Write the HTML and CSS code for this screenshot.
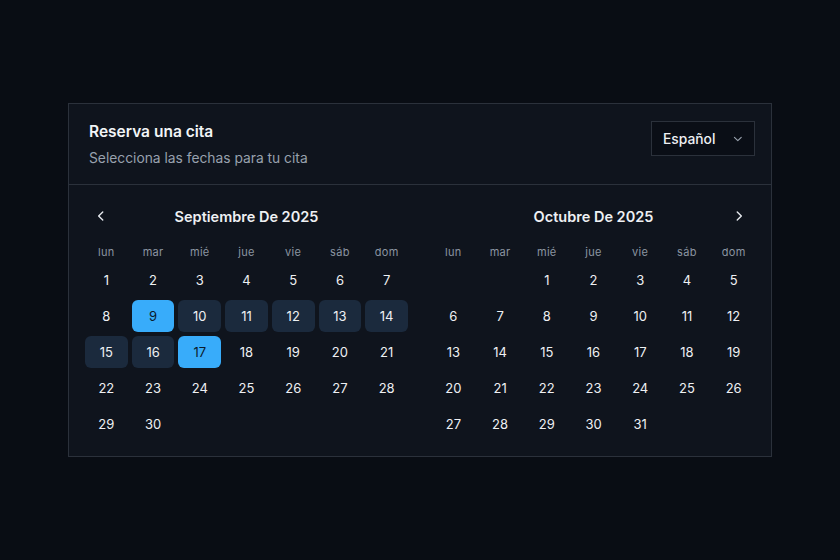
FILE: index.html
```html
<!DOCTYPE html>
<html lang="es">
<head>
    <meta charset="UTF-8">
    <meta name="viewport" content="width=device-width, initial-scale=1.0">
    <title>Reserva una cita</title>
    <link rel="stylesheet" href="styles.css">
</head>
<body>
    <div class="card">
        <div class="card-header">
            <div>
                <h1>Reserva una cita</h1>
                <p class="subtitle">Selecciona las fechas para tu cita</p>
            </div>
            <button class="select">
                <span>Español</span>
                <svg width="14" height="14" viewBox="0 0 24 24" fill="none" stroke="currentColor" stroke-width="2" stroke-linecap="round" stroke-linejoin="round"><path d="M6 9l6 6 6-6"/></svg>
            </button>
        </div>

        <div class="months">
            <div class="month">
                <div class="month-head">
                    <button class="nav nav-prev">
                        <svg width="14" height="14" viewBox="0 0 24 24" fill="none" stroke="currentColor" stroke-width="2.4" stroke-linecap="round" stroke-linejoin="round"><path d="M15 5l-7 7 7 7"/></svg>
                    </button>
                    <span class="month-title">Septiembre De 2025</span>
                </div>
                <div class="grid">
                    <span class="wd">lun</span><span class="wd">mar</span><span class="wd">mié</span><span class="wd">jue</span><span class="wd">vie</span><span class="wd">sáb</span><span class="wd">dom</span>
                    <span class="day">1</span><span class="day">2</span><span class="day">3</span><span class="day">4</span><span class="day">5</span><span class="day">6</span><span class="day">7</span>
                    <span class="day">8</span><span class="day selected">9</span><span class="day range">10</span><span class="day range">11</span><span class="day range">12</span><span class="day range">13</span><span class="day range">14</span>
                    <span class="day range">15</span><span class="day range">16</span><span class="day selected">17</span><span class="day">18</span><span class="day">19</span><span class="day">20</span><span class="day">21</span>
                    <span class="day">22</span><span class="day">23</span><span class="day">24</span><span class="day">25</span><span class="day">26</span><span class="day">27</span><span class="day">28</span>
                    <span class="day">29</span><span class="day">30</span>
                </div>
            </div>

            <div class="month">
                <div class="month-head">
                    <span class="month-title">Octubre De 2025</span>
                    <button class="nav nav-next">
                        <svg width="14" height="14" viewBox="0 0 24 24" fill="none" stroke="currentColor" stroke-width="2.4" stroke-linecap="round" stroke-linejoin="round"><path d="M9 5l7 7-7 7"/></svg>
                    </button>
                </div>
                <div class="grid">
                    <span class="wd">lun</span><span class="wd">mar</span><span class="wd">mié</span><span class="wd">jue</span><span class="wd">vie</span><span class="wd">sáb</span><span class="wd">dom</span>
                    <span class="day empty"></span><span class="day empty"></span><span class="day">1</span><span class="day">2</span><span class="day">3</span><span class="day">4</span><span class="day">5</span>
                    <span class="day">6</span><span class="day">7</span><span class="day">8</span><span class="day">9</span><span class="day">10</span><span class="day">11</span><span class="day">12</span>
                    <span class="day">13</span><span class="day">14</span><span class="day">15</span><span class="day">16</span><span class="day">17</span><span class="day">18</span><span class="day">19</span>
                    <span class="day">20</span><span class="day">21</span><span class="day">22</span><span class="day">23</span><span class="day">24</span><span class="day">25</span><span class="day">26</span>
                    <span class="day">27</span><span class="day">28</span><span class="day">29</span><span class="day">30</span><span class="day">31</span>
                </div>
            </div>
        </div>
    </div>
</body>
</html>
```

FILE: styles.css
```css
body {
    margin: 0;
    padding: 103px 68px;
    background-color: #090d14;
    color: #e6e9ee;
    font-family: Inter, "Liberation Sans", sans-serif;
}
.card {
    width: 702px;
    background: #0f141d;
    border: 1px solid #2b313b;
}
.card-header {
    display: flex;
    justify-content: space-between;
    align-items: flex-start;
    padding: 17px 16px 17px 20px;
    border-bottom: 1px solid #2b313b;
}
h1 {
    margin: 0;
    font-size: 15.5px;
    font-weight: 600;
    line-height: 22px;
    color: #f2f4f7;
}
.subtitle {
    margin: 6px 0 0;
    font-size: 13.8px;
    line-height: 18px;
    color: #98a1ae;
}
.select {
    display: flex;
    align-items: center;
    gap: 16px;
    width: 104px;
    height: 35px;
    padding: 0 9px 0 11px;
    background: #0a0e16;
    border: 1px solid #2b313b;
    color: #eef0f3;
    font-family: inherit;
    font-size: 13.8px;
    font-weight: 500;
}
.select svg {
    color: #9aa3af;
}
.months {
    display: flex;
    gap: 24px;
    padding: 15px 16px 16px;
}
.month {
    width: 323px;
}
.month-head {
    position: relative;
    height: 32px;
    display: flex;
    align-items: center;
    justify-content: center;
}
.month-title {
    font-size: 14.5px;
    font-weight: 600;
    color: #eef0f3;
}
.nav {
    position: absolute;
    top: 6px;
    width: 20px;
    height: 20px;
    padding: 0;
    display: flex;
    align-items: center;
    justify-content: center;
    background: none;
    border: none;
    color: #e6e9ee;
}
.nav-prev {
    left: 6px;
}
.nav-next {
    right: 6px;
}
.grid {
    display: grid;
    grid-template-columns: repeat(7, 1fr);
    column-gap: 4px;
    row-gap: 4px;
    margin-top: 10px;
}
.wd {
    height: 20px;
    line-height: 20px;
    text-align: center;
    font-size: 11px;
    letter-spacing: 0.3px;
    color: #8b94a1;
    margin-bottom: -2px;
}
.day {
    height: 32px;
    line-height: 32px;
    text-align: center;
    font-size: 13px;
    color: #eef0f3;
    border-radius: 6px;
}
.range {
    background: #1b2a3d;
}
.selected {
    background: #38acfa;
    color: #0b1a2b;
}
```
